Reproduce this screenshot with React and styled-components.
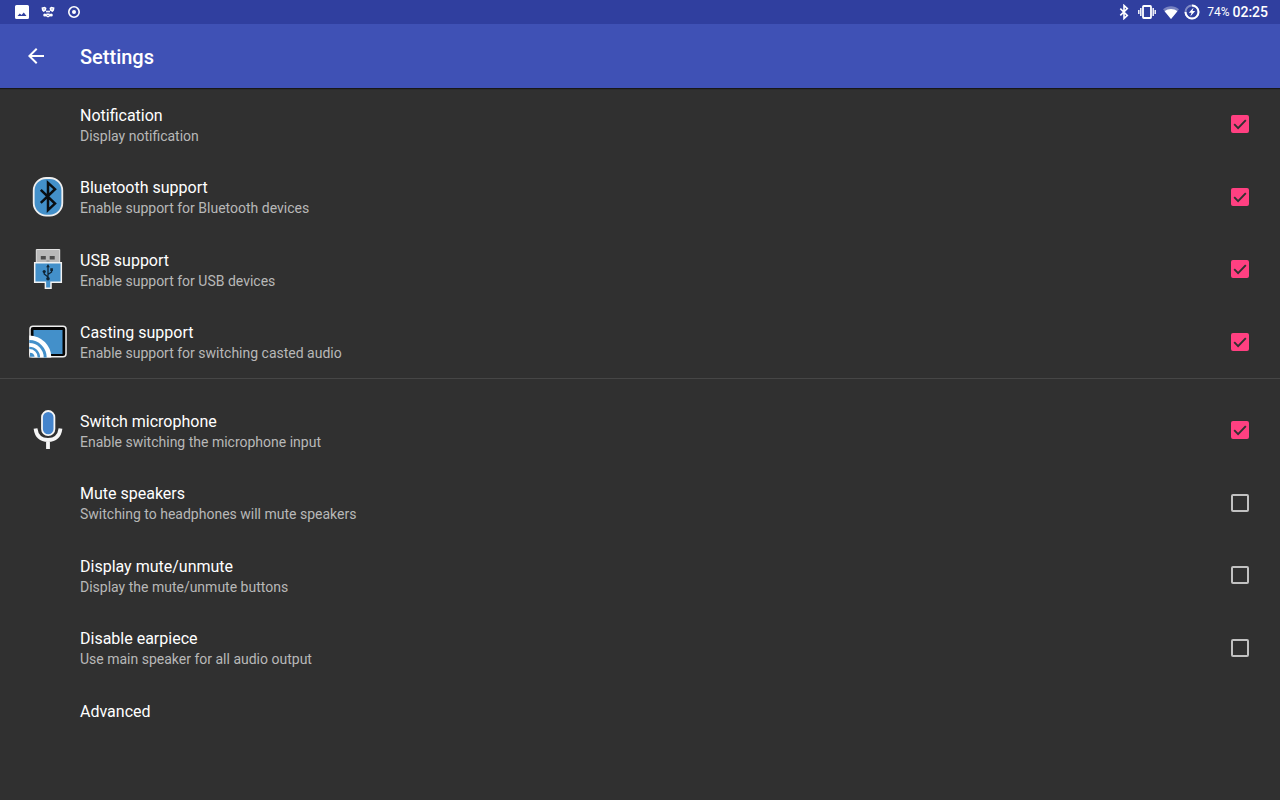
import styled, {createGlobalStyle} from "styled-components";

const GlobalStyle = createGlobalStyle`
  * {
    box-sizing: border-box;
  }
  body {
    margin: 0;
    background-color: #303030;
    color: white;
    font-family: Roboto, sans-serif;
  }
`;

const StatusBar = styled.div`
  display: flex;
  justify-content: space-between;
  align-items: center;
  height: 24px;
  padding: 0 12px 0 14px;
  background-color: #303f9f;
`;

const StatusGroup = styled.div`
  display: flex;
  align-items: center;
  gap: ${props => props.$gap};
`;

const StatusIcon = styled.svg`
  display: block;
  width: ${props => props.$width || "16px"};
  height: 16px;
`;

const Battery = styled.span`
  margin: 0 -2px 0 2px;
  font-size: 12px;
  line-height: 24px;
`;

const Clock = styled.span`
  font-size: 14px;
  font-weight: 500;
  line-height: 24px;
`;

const AppBar = styled.header`
  display: flex;
  align-items: center;
  gap: 32px;
  height: 64px;
  padding: 0 24px;
  background-color: #3f51b5;
  box-shadow: 0 1px 1px rgba(0, 0, 0, 0.5);
`;

const BackButton = styled.button`
  display: block;
  width: 24px;
  height: 24px;
  padding: 0;
  border: 0;
  background: none;
  color: white;
`;

const Title = styled.h1`
  margin: 0;
  padding-top: 2px;
  font-size: 20px;
  font-weight: 500;
  line-height: 24px;
`;

const Section = styled.section`
  display: grid;
  grid-auto-rows: 1fr;
  min-height: 290px;
`;

const Divider = styled.hr`
  height: 1px;
  margin: 0 0 15px;
  border: 0;
  background-color: #464646;
`;

const Row = styled.label`
  display: grid;
  grid-template-columns: 40px 1fr 24px;
  column-gap: 12px;
  align-items: center;
  padding: 0 28px;
`;

const RowIcon = styled.svg`
  display: block;
  width: 40px;
  height: 40px;
`;

const RowText = styled.span`
  grid-column: 2;
  display: flex;
  flex-direction: column;
  padding-top: 3px;
`;

const RowTitle = styled.span`
  font-size: 16px;
  line-height: 20px;
`;

const Summary = styled.span`
  color: #b8b8b8;
  font-size: 14px;
  line-height: 20px;
`;

const CheckWrap = styled.span`
  display: grid;
  place-items: center;
`;

const Checkbox = styled.input.attrs({type: "checkbox"})`
  grid-area: 1 / 1;
  appearance: none;
  width: 18px;
  height: 18px;
  margin: 0;
  border: 2px solid #c1c1c1;
  border-radius: 2px;
  &:checked {
    border-color: #ff4081;
    background-color: #ff4081;
  }
`;

const CheckMark = styled.svg`
  grid-area: 1 / 1;
  width: 18px;
  height: 18px;
  pointer-events: none;
  visibility: hidden;
  ${Checkbox}:checked + & {
    visibility: visible;
  }
`;

const AdvancedButton = styled.button`
  display: block;
  width: 100%;
  padding: 18px 80px;
  border: 0;
  background: none;
  color: white;
  font-family: inherit;
  font-size: 16px;
  line-height: 20px;
  text-align: left;
`;

function BluetoothIcon() {
  return <RowIcon viewBox="0 0 40 40">
    <rect x="5.7" y="1" width="28.6" height="37.6" rx="12.5" fill="#4390ca" stroke="#eee" strokeWidth="1.8"/>
    <path d="M12.8 12.8 27 26.6l-7 6.6V5.8l7 6.4-14.2 13.6" fill="none" stroke="#0a0e12" strokeWidth="2.5"/>
  </RowIcon>;
}

function UsbIcon() {
  return <RowIcon viewBox="0 0 40 40">
    <path d="M8.3.5h23.4V14H8.3z" fill="#b9b9b9" stroke="#e2e2e2"/>
    <path d="M12.8 7h5v3.5h-5zM21.700 7h5v3.500h-5z" fill="#4c4c4c"/>
    <path d="M18.5 11.5h3v1h-3z" fill="#888"/>
    <path d="M6.7 13.7h26.6v19.5H23v6h-5.6v-6H6.7z" fill="#4390ca" stroke="#f2f2f2" strokeWidth="1.5"/>
    <path d="M20 17.5v12M20 28l-3.8-3v-2.500M20 25.500l3.600-2.500v-2" fill="none" stroke="#102434" strokeWidth="1.3"/>
    <path d="m20 15 1.800 3.300h-3.600zM22.300 19.300h2.600v2.600h-2.600z" fill="#102434"/>
    <circle cx="16.2" cy="22.5" r="1.6" fill="#102434"/>
    <circle cx="20" cy="29.8" r="1.8" fill="#102434"/>
  </RowIcon>;
}

function CastIcon() {
  return <RowIcon viewBox="0 0 40 40">
    <rect x="2" y="4.2" width="36" height="30.6" rx="3" fill="#050505" stroke="#eee" strokeWidth="1.5"/>
    <path d="M5.5 8h29v24h-29z" fill="#4390ca"/>
    <path d="M1.3 13.5a22 22 0 0 1 22 22h-22z" fill="white"/>
    <path d="M1.3 19.6a15.900 15.900 0 0 1 15.900 15.900" fill="none" stroke="#4390ca" strokeWidth="3"/>
    <path d="M1.3 25.9a9.600 9.600 0 0 1 9.600 9.600" fill="none" stroke="#4390ca" strokeWidth="2.4"/>
    <path d="M2 30.700a4.800 4.800 0 0 1 4.600 4.100H2z" fill="#4390ca"/>
  </RowIcon>;
}

function MicIcon() {
  return <RowIcon viewBox="0 0 40 40">
    <rect x="14" y="1" width="12.4" height="24.2" rx="6.2" fill="#4484cc" stroke="#f5f5f5" strokeWidth="1.8"/>
    <path d="M7.5 18.500C8.500 26 13 30 20 30s11.500-4 12.500-11.500M20 30v9" fill="none" stroke="#f5f5f5" strokeWidth="3.8"/>
  </RowIcon>;
}

const deviceSettings = [
  {id: "notification", title: "Notification", summary: "Display notification", checked: true},
  {id: "bluetooth", title: "Bluetooth support", summary: "Enable support for Bluetooth devices", checked: true, icon: <BluetoothIcon/>},
  {id: "usb", title: "USB support", summary: "Enable support for USB devices", checked: true, icon: <UsbIcon/>},
  {id: "casting", title: "Casting support", summary: "Enable support for switching casted audio", checked: true, icon: <CastIcon/>},
];

const audioSettings = [
  {id: "microphone", title: "Switch microphone", summary: "Enable switching the microphone input", checked: true, icon: <MicIcon/>},
  {id: "mute", title: "Mute speakers", summary: "Switching to headphones will mute speakers"},
  {id: "display-mute", title: "Display mute/unmute", summary: "Display the mute/unmute buttons"},
  {id: "earpiece", title: "Disable earpiece", summary: "Use main speaker for all audio output"},
];

function Setting({id, title, summary, checked, icon}) {
  return <Row htmlFor={id}>
    {icon}
    <RowText>
      <RowTitle>{title}</RowTitle>
      <Summary>{summary}</Summary>
    </RowText>
    <CheckWrap>
      <Checkbox id={id} defaultChecked={checked}/>
      <CheckMark viewBox="0 0 18 18">
        <path d="m3.2 9.200 3.900 3.900 7.700-8" fill="none" stroke="#303030" strokeWidth="1.9"/>
      </CheckMark>
    </CheckWrap>
  </Row>;
}

function App() {
  return <>
    <GlobalStyle/>
    <StatusBar>
      <StatusGroup $gap="10px">
        <StatusIcon viewBox="0 0 16 16">
          <path fillRule="evenodd" d="M2.500 1h11A1.500 1.500 0 0 1 15 2.500v11a1.500 1.500 0 0 1-1.500 1.500h-11A1.500 1.500 0 0 1 1 13.500v-11A1.500 1.500 0 0 1 2.500 1zM3.500 12h9L9.800 8.400l-2.300 2.700L5.800 9.500z" fill="white"/>
        </StatusIcon>
        <StatusIcon viewBox="0 0 16 16">
          <g fill="white">
            <path d="M1.500 3.500 4.800 2.800 6.500 4 5.800 6.800 3.500 8 2 6.500zM14.500 3.500l-3.300-.7L9.500 4l.7 2.800L12.500 8 14 6.500z"/>
            <circle cx="7" cy="7.5" r="1"/>
            <circle cx="9" cy="7.5" r="1"/>
            <circle cx="4.8" cy="11" r="1.6"/>
            <circle cx="11.2" cy="11" r="1.6"/>
            <path d="M6.500 9.500h3l1 2.500L8 13.500 5.500 12z"/>
          </g>
          <path d="M3.500 5h1M11.500 5h1M7.300 11.500h1.400" stroke="#303f9f" strokeWidth=".8"/>
        </StatusIcon>
        <StatusIcon viewBox="0 0 16 16">
          <circle cx="8" cy="8" r="5.2" fill="none" stroke="white" strokeWidth="1.6"/>
          <circle cx="8" cy="8" r="2" fill="white"/>
        </StatusIcon>
      </StatusGroup>
      <StatusGroup $gap="5px">
        <StatusIcon viewBox="0 0 16 16">
          <path d="M3.300 4.700 10.300 11.400 7 14.500v-13l3.300 3.100-7 6.700" fill="none" stroke="white" strokeWidth="1.6"/>
        </StatusIcon>
        <StatusIcon $width="18px" viewBox="0 0 18 16">
          <rect x="5" y="2" width="8" height="12" rx=".8" fill="none" stroke="white" strokeWidth="1.8"/>
          <path d="M2.800 4v8M15.200 4v8M.8 6v4M17.200 6v4" stroke="white" strokeWidth="1.4"/>
        </StatusIcon>
        <StatusIcon $width="18px" viewBox="0 0 18 16">
          <path d="M2 5.200C6.500 1.200 13.500 1.200 18 5.200L10 15z" fill="white" fillOpacity=".35"/>
          <path d="M3.600 7.200c3.700-3 9.100-3 12.800 0L10 15z" fill="white"/>
        </StatusIcon>
        <StatusIcon viewBox="0 0 16 16">
          <circle cx="8" cy="8" r="6.5" fill="none" stroke="white" strokeOpacity=".4" strokeWidth="2"/>
          <path d="M8 1.500a6.500 6.500 0 1 1-6.500 6.500" fill="none" stroke="white" strokeWidth="2"/>
          <path d="M9.600 3.500 4.800 8.700h2.700l-1.200 3.800 4.900-5.400H8.500z" fill="white"/>
        </StatusIcon>
        <Battery>74%</Battery>
        <Clock>02:25</Clock>
      </StatusGroup>
    </StatusBar>
    <AppBar>
      <BackButton aria-label="Back">
        <svg width="24" height="24" viewBox="0 0 24 24">
          <path d="M20 11H7.830l5.590-5.590L12 4l-8 8 8 8 1.410-1.410L7.830 13H20z" fill="currentColor"/>
        </svg>
      </BackButton>
      <Title>Settings</Title>
    </AppBar>
    <main>
      <Section>
        {deviceSettings.map(item => <Setting key={item.id} {...item}/>)}
      </Section>
      <Divider/>
      <Section>
        {audioSettings.map(item => <Setting key={item.id} {...item}/>)}
      </Section>
      <AdvancedButton>Advanced</AdvancedButton>
    </main>
  </>;
}

export default App;
